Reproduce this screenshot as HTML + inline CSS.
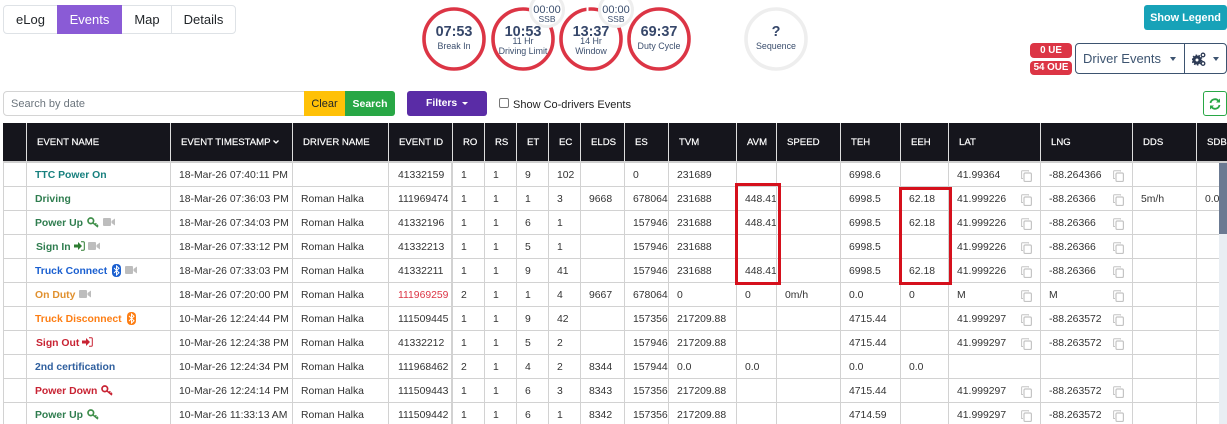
<!DOCTYPE html>
<html><head><meta charset="utf-8"><style>
*{box-sizing:border-box}
html,body{margin:0;padding:0;background:#fff;width:1227px;height:424px;overflow:hidden;font-family:"Liberation Sans",sans-serif;color:#212529}
.a{position:absolute}
.tab{position:absolute;top:5px;height:29px;line-height:27px;text-align:center;font-size:13px;border:1px solid #dee2e6;background:#fff}
.g{position:absolute;top:7px;width:64px;height:64px;color:#3c4f6e;text-align:center}
.g svg{position:absolute;left:0;top:0}
.g b{position:absolute;left:0;right:0;top:15.5px;font-size:14.4px;line-height:18px;color:#36476a}
.g i{position:absolute;left:-4px;right:-4px;font-style:normal;font-size:8.9px;line-height:10px}
.ssb{position:absolute;top:-15px;width:36px;height:36px;border-radius:50%;background:#fff;border:3px solid #eee;text-align:center;color:#3c4f6e}
.ssb u{position:absolute;left:-3px;right:-3px;top:8px;text-decoration:none;font-size:11px;line-height:14px}
.ssb s{position:absolute;left:-3px;right:-3px;top:19px;text-decoration:none;font-size:8.5px;line-height:10px}
#wrap{position:absolute;left:3px;top:123px;width:1224px;height:301px;overflow:hidden}
table{border-collapse:separate;border-spacing:0;table-layout:fixed;width:1258px;font-size:10.4px}
th{height:40px;background:#15151c;color:#fff;font-weight:400;text-align:left;padding:0 0 0 10px;border-right:1px solid #ddd;border-bottom:2px solid #cfcfcf;white-space:nowrap;overflow:hidden;font-size:9.6px;-webkit-text-stroke:.2px #fff}
td{height:24px;padding:1px 0 0 8px;border-right:1px solid #d2d2d2;border-bottom:1px solid #d2d2d2;white-space:nowrap;overflow:hidden;color:#333;position:relative}
tr td:first-child{border-left:1px solid #d2d2d2}
td:nth-child(2){font-weight:700}
td:nth-child(5){border-right:2px solid #d2d2d2;padding-left:9px}
td svg{position:absolute}
.c svg{left:72px;top:7px}
.box{position:absolute;border:3px solid #d5101c}
</style></head><body>
<svg width="0" height="0" style="position:absolute"><defs>
<symbol id="key" viewBox="0 0 12 11"><circle cx="3.8" cy="3.8" r="2.8" fill="none" stroke="currentColor" stroke-width="1.7"/><path d="M5.8 5.8L11 10M8 7.6L9.4 6.3M9.8 9L11 7.8" fill="none" stroke="currentColor" stroke-width="1.5"/></symbol>
<symbol id="vid" viewBox="0 0 12 8"><rect x="0" y="0" width="8" height="8" rx="1" fill="#bdbdbd"/><path d="M8.5 3L12 .5V7.500L8.500 5Z" fill="#bdbdbd"/></symbol>
<symbol id="bt" viewBox="0 0 9 13"><rect width="9" height="13" rx="4" fill="currentColor"/><path d="M2 4L7 8.700L4.500 11V2L7 4.300L2 9" fill="none" stroke="#fff" stroke-width="1"/></symbol>
<symbol id="in" viewBox="0 0 11 10"><path d="M0 3.500H4V1L8 5L4 9V6.500H0Z" fill="currentColor"/><path d="M7 .7H9.300Q10.300 .7 10.300 1.700V8.300Q10.300 9.300 9.300 9.300H7" fill="none" stroke="currentColor" stroke-width="1"/></symbol>
<symbol id="cp" viewBox="0 0 11 12"><path d="M7.500 1.500V.8H1.300Q.6 .8 .6 1.500V8.500H2" fill="none" stroke="#c4c4c4" stroke-width="1"/><rect x="3" y="3" width="7.400" height="8.500" rx="1.300" fill="none" stroke="#c4c4c4" stroke-width="1.200"/></symbol>
</defs></svg>

<div class="tab" style="left:3px;width:55px;border-radius:4px 0 0 4px">eLog</div>
<div class="tab" style="left:57px;width:65px;background:#8a5bd6;border-color:#8a5bd6;color:#fff">Events</div>
<div class="tab" style="left:122px;width:50px;border-left:0;border-right:0">Map</div>
<div class="tab" style="left:171px;width:65px;border-radius:0 4px 4px 0">Details</div>

<div class="g" style="left:422px"><svg width="64" height="64"><circle cx="32" cy="32" r="30" fill="none" stroke="#dc3545" stroke-width="3.600"/></svg><b>07:53</b><i style="top:33.500px">Break In</i></div>
<div class="g" style="left:491px"><svg width="64" height="64"><circle cx="32" cy="32" r="30" fill="none" stroke="#dc3545" stroke-width="3.600"/></svg><b>10:53</b><i style="top:29px">11 Hr</i><i style="top:39px">Driving Limit</i><div class="ssb" style="left:38px"><u>00:00</u><s>SSB</s></div></div>
<div class="g" style="left:559px"><svg width="64" height="64"><circle cx="32" cy="32" r="30" fill="none" stroke="#dc3545" stroke-width="3.600"/><rect x="27.500" y="0" width="2" height="5" fill="#fff"/></svg><b>13:37</b><i style="top:29px">14 Hr</i><i style="top:39px">Window</i><div class="ssb" style="left:39px"><u>00:00</u><s>SSB</s></div></div>
<div class="g" style="left:627px"><svg width="64" height="64"><circle cx="32" cy="32" r="30" fill="none" stroke="#dc3545" stroke-width="3.600"/></svg><b>69:37</b><i style="top:33.500px">Duty Cycle</i></div>
<div class="g" style="left:744px"><svg width="64" height="64"><circle cx="32" cy="32" r="30" fill="none" stroke="#eee" stroke-width="3.600"/></svg><b>?</b><i style="top:33.500px">Sequence</i></div>

<div class="a" style="left:1144px;top:5px;width:83px;height:25px;background:#17a2b8;border-radius:3px;color:#fff;font-size:10.900px;font-weight:700;line-height:25px;text-align:center;padding-top:1px">Show Legend</div>
<div class="a" style="left:1030px;top:43px;width:42px;height:15px;background:#dc3545;border-radius:4px;color:#fff;font-size:9.800px;font-weight:700;line-height:15px;text-align:center">0 UE</div>
<div class="a" style="left:1030px;top:61px;width:42px;height:14px;background:#dc3545;border-radius:4px;color:#fff;font-size:9.800px;font-weight:700;line-height:14px;text-align:center">54 OUE</div>
<div class="a" style="left:1075px;top:43px;width:110px;height:31px;border:1px solid #3d5470;border-radius:4px 0 0 4px;color:#3d5470;font-size:13px;line-height:29px;padding-left:7px">Driver Events</div>
<div class="a" style="left:1170px;top:57px;border:3.500px solid transparent;border-top:4px solid #3d5470;border-bottom:0"></div>
<div class="a" style="left:1184px;top:43px;width:43px;height:31px;border:1px solid #3d5470;border-radius:0 4px 4px 0"></div>
<svg class="a" style="left:1192px;top:52px" width="14" height="14" viewBox="0 0 14 14"><circle cx="5" cy="8" r="3" fill="none" stroke="#2d3b55" stroke-width="3"/><circle cx="5" cy="8" r="4.800" fill="none" stroke="#2d3b55" stroke-width="1.400" stroke-dasharray="1.600 1.400"/><circle cx="11" cy="3" r="1.800" fill="none" stroke="#2d3b55" stroke-width="1.300"/><circle cx="11" cy="11.500" r="1.800" fill="none" stroke="#2d3b55" stroke-width="1.300"/></svg>
<div class="a" style="left:1213px;top:57px;border:3.500px solid transparent;border-top:4px solid #3d5470;border-bottom:0"></div>

<div class="a" style="left:3px;top:91px;width:302px;height:25px;border:1px solid #d4d4d4;border-radius:4px 0 0 4px;font-size:11px;line-height:24px;padding-left:7px;color:#6c757d">Search by date</div>
<div class="a" style="left:304px;top:91px;width:41px;height:25px;background:#ffc107;font-size:11px;line-height:26px;text-align:center">Clear</div>
<div class="a" style="left:345px;top:91px;width:50px;height:25px;background:#28a745;border-radius:0 3px 3px 0;color:#fff;font-size:10.500px;font-weight:700;line-height:26px;text-align:center">Search</div>
<div class="a" style="left:407px;top:91px;width:80px;height:25px;background:#5a2ca6;border-radius:3px;color:#fff;font-size:10.400px;font-weight:700;line-height:26px;padding-left:19px">Filters</div>
<div class="a" style="left:462px;top:102px;border:3px solid transparent;border-top:3px solid #fff;border-bottom:0"></div>
<div class="a" style="left:499px;top:98px;width:10px;height:10px;border:1px solid #767676;border-radius:2px;background:#fff"></div>
<div class="a" style="left:513px;top:98px;font-size:11px;line-height:14px;white-space:nowrap;color:#222">Show Co-drivers Events</div>
<div class="a" style="left:1203px;top:91px;width:24px;height:25px;border:1px solid #28a745;border-radius:3px"></div>
<svg class="a" style="left:1209px;top:98px" width="12" height="12" viewBox="0 0 12 12"><path d="M1.500 5A4.500 4.500 0 0 1 9.500 3M10.500 7A4.500 4.500 0 0 1 2.500 9" fill="none" stroke="#28a745" stroke-width="1.800"/><path d="M11 .5V4.500H7ZM1 11.500V7.500H5Z" fill="#28a745"/></svg>

<div id="wrap"><table>
<colgroup><col style="width:24px"><col style="width:144px"><col style="width:122px"><col style="width:96px"><col style="width:64px"><col style="width:32px"><col style="width:32px"><col style="width:32px"><col style="width:32px"><col style="width:44px"><col style="width:44px"><col style="width:68px"><col style="width:40px"><col style="width:64px"><col style="width:60px"><col style="width:48px"><col style="width:92px"><col style="width:92px"><col style="width:64px"><col style="width:64px"></colgroup>
<tr><th></th><th>EVENT NAME</th><th>EVENT TIMESTAMP <svg width="6" height="4" viewBox="0 0 6 4" style="vertical-align:1px"><path d="M.5 .5L3 3L5.500 .5" fill="none" stroke="#fff" stroke-width="1.300"/></svg></th><th>DRIVER NAME</th><th>EVENT ID</th><th>RO</th><th>RS</th><th>ET</th><th>EC</th><th>ELDS</th><th>ES</th><th>TVM</th><th>AVM</th><th>SPEED</th><th>TEH</th><th>EEH</th><th>LAT</th><th>LNG</th><th>DDS</th><th>SDB</th></tr>
<tr><td></td><td style="color:#17807e">TTC Power On</td><td>18-Mar-26 07:40:11 PM</td><td></td><td>41332159</td><td>1</td><td>1</td><td>9</td><td>102</td><td></td><td>0</td><td>231689</td><td></td><td></td><td>6998.6</td><td></td><td class="c">41.99364<svg width="11" height="12"><use href="#cp"/></svg></td><td class="c">-88.264366<svg width="11" height="12"><use href="#cp"/></svg></td><td></td><td></td></tr>
<tr><td></td><td style="color:#2f7d4f">Driving</td><td>18-Mar-26 07:36:03 PM</td><td>Roman Halka</td><td>111969474</td><td>1</td><td>1</td><td>1</td><td>3</td><td>9668</td><td>678064</td><td>231688</td><td>448.41</td><td></td><td>6998.5</td><td>62.18</td><td class="c">41.999226<svg width="11" height="12"><use href="#cp"/></svg></td><td class="c">-88.26366<svg width="11" height="12"><use href="#cp"/></svg></td><td>5m/h</td><td>0.0</td></tr>
<tr><td></td><td style="color:#2f7d4f">Power Up<svg width="12" height="11" style="color:#3f8f4a;left:60px;top:6px"><use href="#key"/></svg><svg width="12" height="8" style="left:76px;top:7px"><use href="#vid"/></svg></td><td>18-Mar-26 07:34:03 PM</td><td>Roman Halka</td><td>41332196</td><td>1</td><td>1</td><td>6</td><td>1</td><td></td><td>157946</td><td>231688</td><td>448.41</td><td></td><td>6998.5</td><td>62.18</td><td class="c">41.999226<svg width="11" height="12"><use href="#cp"/></svg></td><td class="c">-88.26366<svg width="11" height="12"><use href="#cp"/></svg></td><td></td><td></td></tr>
<tr><td></td><td style="color:#2f7d4f;padding-left:9px">Sign In<svg width="11" height="10" style="color:#2e7d32;left:47px;top:6px"><use href="#in"/></svg><svg width="12" height="8" style="left:61px;top:7px"><use href="#vid"/></svg></td><td>18-Mar-26 07:33:12 PM</td><td>Roman Halka</td><td>41332213</td><td>1</td><td>1</td><td>5</td><td>1</td><td></td><td>157946</td><td>231688</td><td></td><td></td><td>6998.5</td><td></td><td class="c">41.999226<svg width="11" height="12"><use href="#cp"/></svg></td><td class="c">-88.26366<svg width="11" height="12"><use href="#cp"/></svg></td><td></td><td></td></tr>
<tr><td></td><td style="color:#1a5fd0">Truck Connect<svg width="9" height="13" style="color:#1a5fd0;left:85px;top:5px"><use href="#bt"/></svg><svg width="12" height="8" style="left:98px;top:7px"><use href="#vid"/></svg></td><td>18-Mar-26 07:33:03 PM</td><td>Roman Halka</td><td>41332211</td><td>1</td><td>1</td><td>9</td><td>41</td><td></td><td>157946</td><td>231688</td><td>448.41</td><td></td><td>6998.5</td><td>62.18</td><td class="c">41.999226<svg width="11" height="12"><use href="#cp"/></svg></td><td class="c">-88.26366<svg width="11" height="12"><use href="#cp"/></svg></td><td></td><td></td></tr>
<tr><td></td><td style="color:#e0902e">On Duty<svg width="12" height="8" style="left:52px;top:7px"><use href="#vid"/></svg></td><td>18-Mar-26 07:20:00 PM</td><td>Roman Halka</td><td style="color:#dc3545">111969259</td><td>2</td><td>1</td><td>1</td><td>4</td><td>9667</td><td>678064</td><td>0</td><td>0</td><td>0m/h</td><td>0.0</td><td>0</td><td class="c">M<svg width="11" height="12"><use href="#cp"/></svg></td><td class="c">M<svg width="11" height="12"><use href="#cp"/></svg></td><td></td><td></td></tr>
<tr><td></td><td style="color:#fd7e14">Truck Disconnect<svg width="9" height="13" style="color:#fd7e14;left:100px;top:5px"><use href="#bt"/></svg></td><td>10-Mar-26 12:24:44 PM</td><td>Roman Halka</td><td>111509445</td><td>1</td><td>1</td><td>9</td><td>42</td><td></td><td>157356</td><td>217209.88</td><td></td><td></td><td>4715.44</td><td></td><td class="c">41.999297<svg width="11" height="12"><use href="#cp"/></svg></td><td class="c">-88.263572<svg width="11" height="12"><use href="#cp"/></svg></td><td></td><td></td></tr>
<tr><td></td><td style="color:#c82333;padding-left:9px">Sign Out<svg width="11" height="10" style="color:#c82333;left:55px;top:6px"><use href="#in"/></svg></td><td>10-Mar-26 12:24:38 PM</td><td>Roman Halka</td><td>41332212</td><td>1</td><td>1</td><td>5</td><td>2</td><td></td><td>157946</td><td>217209.88</td><td></td><td></td><td>4715.44</td><td></td><td class="c">41.999297<svg width="11" height="12"><use href="#cp"/></svg></td><td class="c">-88.263572<svg width="11" height="12"><use href="#cp"/></svg></td><td></td><td></td></tr>
<tr><td></td><td style="color:#2f5f9e">2nd certification</td><td>10-Mar-26 12:24:34 PM</td><td>Roman Halka</td><td>111968462</td><td>2</td><td>1</td><td>4</td><td>2</td><td>8344</td><td>157944</td><td>0.0</td><td>0.0</td><td></td><td>0.0</td><td>0.0</td><td></td><td></td><td></td><td></td></tr>
<tr><td></td><td style="color:#c82333">Power Down<svg width="12" height="11" style="color:#c82333;left:74px;top:6px"><use href="#key"/></svg></td><td>10-Mar-26 12:24:14 PM</td><td>Roman Halka</td><td>111509443</td><td>1</td><td>1</td><td>6</td><td>3</td><td>8343</td><td>157356</td><td>217209.88</td><td></td><td></td><td>4715.44</td><td></td><td class="c">41.999297<svg width="11" height="12"><use href="#cp"/></svg></td><td class="c">-88.263572<svg width="11" height="12"><use href="#cp"/></svg></td><td></td><td></td></tr>
<tr><td></td><td style="color:#2f7d4f">Power Up<svg width="12" height="11" style="color:#3f8f4a;left:60px;top:6px"><use href="#key"/></svg></td><td>10-Mar-26 11:33:13 AM</td><td>Roman Halka</td><td>111509442</td><td>1</td><td>1</td><td>6</td><td>1</td><td>8342</td><td>157356</td><td>217209.88</td><td></td><td></td><td>4714.59</td><td></td><td class="c">41.999297<svg width="11" height="12"><use href="#cp"/></svg></td><td class="c">-88.263572<svg width="11" height="12"><use href="#cp"/></svg></td><td></td><td></td></tr>
</table></div>

<div class="box" style="left:735px;top:183px;width:46px;height:102px"></div>
<div class="box" style="left:899px;top:187px;width:53px;height:98px"></div>
<div class="a" style="left:1219px;top:163px;width:8px;height:261px;background:#e9eef3"></div>
<div class="a" style="left:1219px;top:163px;width:8px;height:71px;background:#6b7a92"></div>
</body></html>
